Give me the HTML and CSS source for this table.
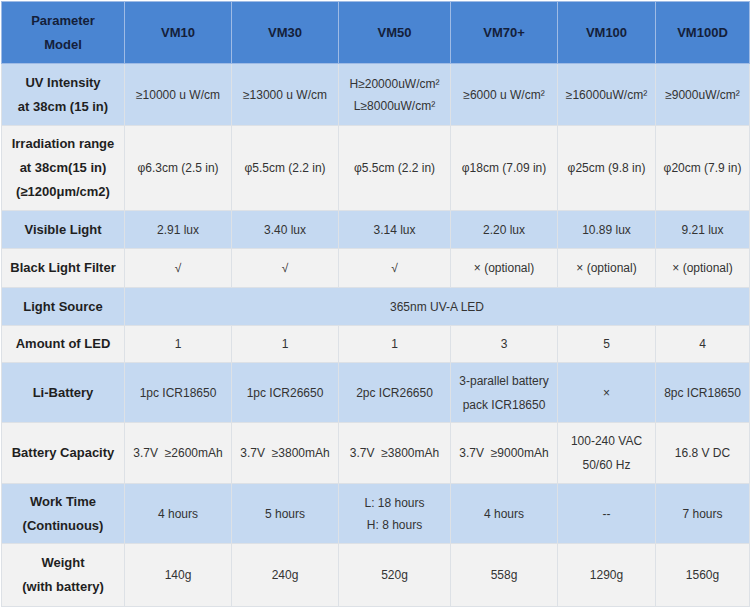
FILE: index.html
```html
<!DOCTYPE html>
<html>
<head>
<meta charset="utf-8">
<link rel="stylesheet" href="styles.css">
</head>
<body>
<table class="spec">
  <colgroup>
    <col class="c0"><col class="c1"><col class="c2"><col class="c3"><col class="c4"><col class="c5"><col class="c6">
  </colgroup>
  <tr class="head r-head">
    <th>Parameter<br>Model</th><th>VM10</th><th>VM30</th><th>VM50</th><th>VM70+</th><th>VM100</th><th>VM100D</th>
  </tr>
  <tr class="blue r-uv">
    <th>UV Intensity<br>at 38cm (15 in)</th>
    <td>≥10000 u W/cm</td><td>≥13000 u W/cm</td><td class="tight">H≥20000uW/cm²<br>L≥8000uW/cm²</td><td>≥6000 u W/cm²</td><td>≥16000uW/cm²</td><td>≥9000uW/cm²</td>
  </tr>
  <tr class="gray r-irr">
    <th>Irradiation range<br>at 38cm(15 in)<br>(≥1200μm/cm2)</th>
    <td>φ6.3cm (2.5 in)</td><td>φ5.5cm (2.2 in)</td><td>φ5.5cm (2.2 in)</td><td>φ18cm (7.09 in)</td><td>φ25cm (9.8 in)</td><td>φ20cm (7.9 in)</td>
  </tr>
  <tr class="blue r-vis">
    <th>Visible Light</th>
    <td>2.91 lux</td><td>3.40 lux</td><td>3.14 lux</td><td>2.20 lux</td><td>10.89 lux</td><td>9.21 lux</td>
  </tr>
  <tr class="gray r-blk">
    <th>Black Light Filter</th>
    <td>√</td><td>√</td><td>√</td><td>× (optional)</td><td>× (optional)</td><td>× (optional)</td>
  </tr>
  <tr class="blue r-src">
    <th>Light Source</th>
    <td colspan="6">365nm UV-A LED</td>
  </tr>
  <tr class="gray r-led">
    <th>Amount of LED</th>
    <td>1</td><td>1</td><td>1</td><td>3</td><td>5</td><td>4</td>
  </tr>
  <tr class="blue r-bat">
    <th>Li-Battery</th>
    <td>1pc ICR18650</td><td>1pc ICR26650</td><td>2pc ICR26650</td><td>3-parallel battery<br>pack ICR18650</td><td>×</td><td>8pc ICR18650</td>
  </tr>
  <tr class="gray r-cap">
    <th>Battery Capacity</th>
    <td>3.7V &nbsp;≥2600mAh</td><td>3.7V &nbsp;≥3800mAh</td><td>3.7V &nbsp;≥3800mAh</td><td>3.7V &nbsp;≥9000mAh</td><td>100-240 VAC<br>50/60 Hz</td><td>16.8 V DC</td>
  </tr>
  <tr class="blue r-work">
    <th>Work Time<br>(Continuous)</th>
    <td>4 hours</td><td>5 hours</td><td class="tight">L: 18 hours<br>H: 8 hours</td><td>4 hours</td><td>--</td><td>7 hours</td>
  </tr>
  <tr class="gray r-wt">
    <th>Weight<br>(with battery)</th>
    <td>140g</td><td>240g</td><td>520g</td><td>558g</td><td>1290g</td><td>1560g</td>
  </tr>
</table>
</body>
</html>
```

FILE: styles.css
```css
html, body {
  margin: 0;
  padding: 0;
  background: #ffffff;
}
.spec {
  margin: 1px 0 0 1px;
  width: 748px;
  border-collapse: collapse;
  table-layout: fixed;
  font-family: "Liberation Sans", Arial, sans-serif;
  font-size: 12px;
  color: #333333;
}
.c0 { width: 123px; }
.c1 { width: 107px; }
.c2 { width: 107px; }
.c3 { width: 112px; }
.c4 { width: 107px; }
.c5 { width: 98px; }
.c6 { width: 94px; }
.spec th, .spec td {
  border: 1px solid #dde1e6;
  padding: 0 2px;
  text-align: center;
  vertical-align: middle;
  line-height: 24px;
  box-sizing: border-box;
}
.spec th {
  font-size: 13px;
  font-weight: bold;
  color: #1f1f1f;
}
.spec td.tight { line-height: 22px; }
.head th {
  background: #4a85d2;
  border-color: #9fbbe5;
  color: #14203a;
}
.blue th, .blue td { background: #c5d9f1; }
.gray th, .gray td { background: #f2f2f2; }
.r-head { height: 62px; }
.r-uv { height: 62px; }
.r-irr { height: 85px; }
.r-vis { height: 38px; }
.r-blk { height: 39px; }
.r-src { height: 38px; }
.r-led { height: 37px; }
.r-bat { height: 60px; }
.r-cap { height: 61px; }
.r-work { height: 60px; }
.r-wt { height: 63px; }
```
